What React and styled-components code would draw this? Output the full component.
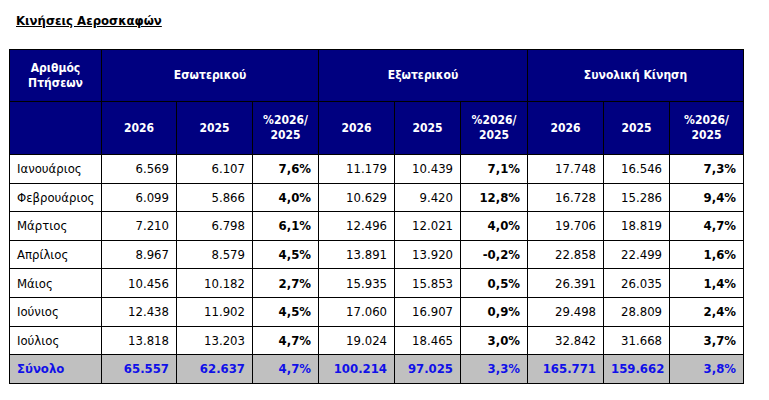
import React from 'react';
import styled, { createGlobalStyle } from 'styled-components';

const GlobalStyle = createGlobalStyle`
  body {
    margin: 0;
    background: #ffffff;
    font-family: "DejaVu Sans Condensed", "DejaVu Sans", sans-serif;
  }
`;

const Page = styled.div`
  padding: 13px 26px 0 9px;
`;

const Title = styled.h3`
  margin: 0 0 20px 7px;
  font-size: 13px;
  font-weight: bold;
  text-decoration: underline;
  line-height: 16px;
  color: #000;
`;

const Table = styled.table`
  border-collapse: collapse;
  table-layout: fixed;
  width: 734px;
  font-size: 13px;
`;

const HeadCell = styled.th`
  background: #000080;
  color: #ffffff;
  border: 1px solid #000;
  font-size: 12px;
  font-weight: bold;
  text-align: center;
  vertical-align: middle;
  padding: 0 4px;
  line-height: 15px;
`;

const HeadRow = styled.tr`
  height: ${({ h }) => h}px;
`;

const Row = styled.tr`
  height: 28.6px;
  background: ${({ total }) => (total ? '#c0c0c0' : '#ffffff')};
  color: ${({ total }) => (total ? '#1010e8' : '#000')};
  font-weight: ${({ total }) => (total ? 'bold' : 'normal')};
`;

const Cell = styled.td`
  border: 1px solid #000;
  padding: 0 7px;
  text-align: ${({ left }) => (left ? 'left' : 'right')};
  font-weight: ${({ bold }) => (bold ? 'bold' : 'inherit')};
  vertical-align: middle;
  white-space: nowrap;
`;

const widths = [92, 75, 76, 66, 76, 66, 67, 76, 66, 74];

const rows = [
  ['Ιανουάριος', '6.569', '6.107', '7,6%', '11.179', '10.439', '7,1%', '17.748', '16.546', '7,3%'],
  ['Φεβρουάριος', '6.099', '5.866', '4,0%', '10.629', '9.420', '12,8%', '16.728', '15.286', '9,4%'],
  ['Μάρτιος', '7.210', '6.798', '6,1%', '12.496', '12.021', '4,0%', '19.706', '18.819', '4,7%'],
  ['Απρίλιος', '8.967', '8.579', '4,5%', '13.891', '13.920', '-0,2%', '22.858', '22.499', '1,6%'],
  ['Μάιος', '10.456', '10.182', '2,7%', '15.935', '15.853', '0,5%', '26.391', '26.035', '1,4%'],
  ['Ιούνιος', '12.438', '11.902', '4,5%', '17.060', '16.907', '0,9%', '29.498', '28.809', '2,4%'],
  ['Ιούλιος', '13.818', '13.203', '4,7%', '19.024', '18.465', '3,0%', '32.842', '31.668', '3,7%'],
];

const total = ['Σύνολο', '65.557', '62.637', '4,7%', '100.214', '97.025', '3,3%', '165.771', '159.662', '3,8%'];

const YearHeads = () => (
  <>
    <HeadCell>2026</HeadCell>
    <HeadCell>2025</HeadCell>
    <HeadCell>%2026/<br />2025</HeadCell>
  </>
);

const App = () => {
  return (
    <Page>
      <GlobalStyle />
      <Title>Κινήσεις Αεροσκαφών</Title>
      <Table>
        <colgroup>
          {widths.map((w, i) => (
            <col key={i} style={{ width: w }} />
          ))}
        </colgroup>
        <thead>
          <HeadRow h={52}>
            <HeadCell>Αριθμός<br />Πτήσεων</HeadCell>
            <HeadCell colSpan={3}>Εσωτερικού</HeadCell>
            <HeadCell colSpan={3}>Εξωτερικού</HeadCell>
            <HeadCell colSpan={3}>Συνολική Κίνηση</HeadCell>
          </HeadRow>
          <HeadRow h={53}>
            <HeadCell />
            <YearHeads />
            <YearHeads />
            <YearHeads />
          </HeadRow>
        </thead>
        <tbody>
          {rows.map((r) => (
            <Row key={r[0]}>
              {r.map((v, i) => (
                <Cell key={i} left={i === 0} bold={i % 3 === 0 && i > 0}>
                  {v}
                </Cell>
              ))}
            </Row>
          ))}
          <Row total>
            {total.map((v, i) => (
              <Cell key={i} left={i === 0}>
                {v}
              </Cell>
            ))}
          </Row>
        </tbody>
      </Table>
    </Page>
  );
};

export default App;
